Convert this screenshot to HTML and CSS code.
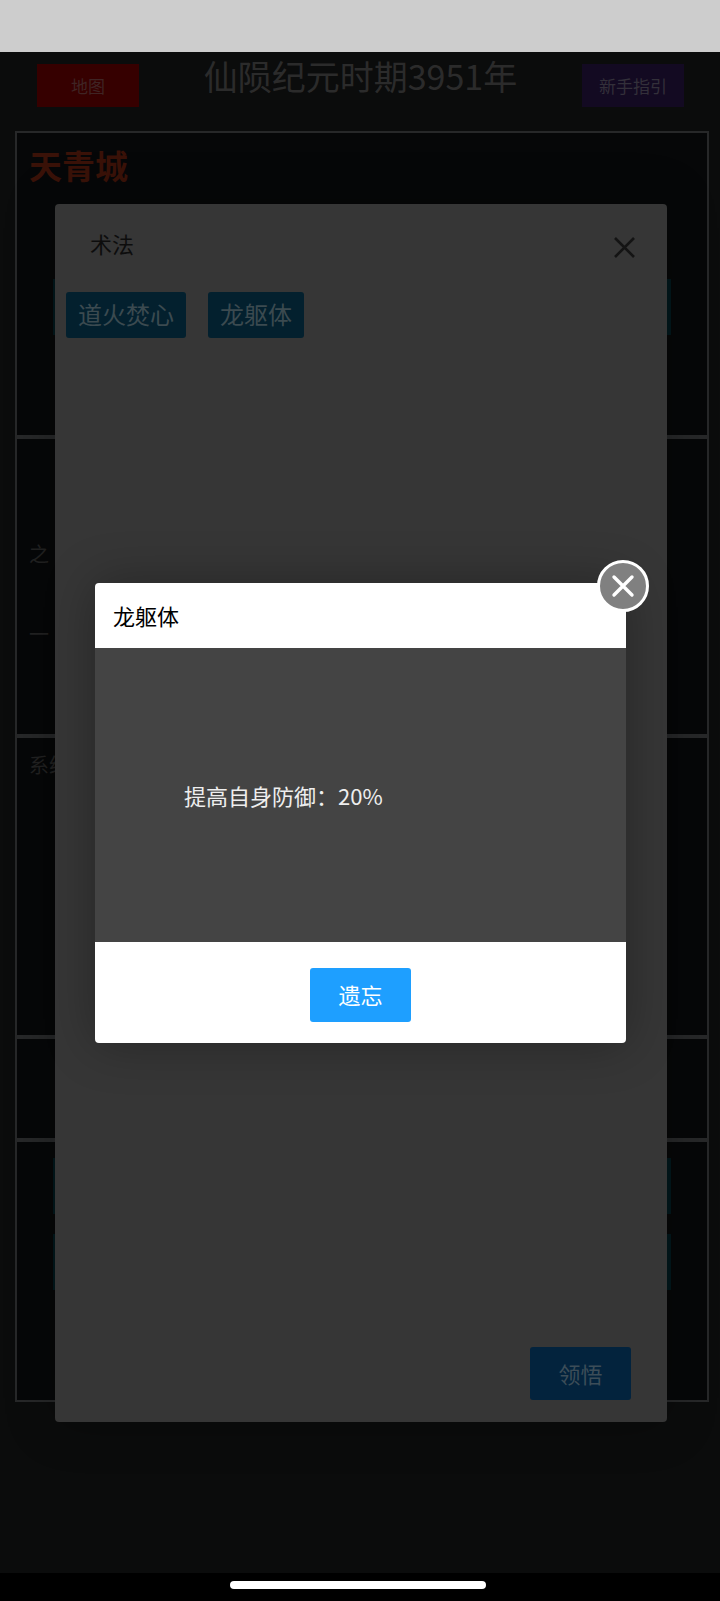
FILE: index.html
```html
<!DOCTYPE html>
<html lang="zh-CN">
<head>
    <meta charset="UTF-8">
    <title>仙陨纪元</title>
    <link rel="stylesheet" href="styles.css">
</head>
<body>
    <div class="status-bar"></div>

    <div class="page">
        <div class="top">
            <a class="top-btn map-btn">地图</a>
            <h1>仙陨纪元时期3951年</h1>
            <a class="top-btn guide-btn">新手指引</a>
        </div>

        <div class="board">
            <section class="cell cell-city">
                <h2>天青城</h2>
                <div class="strip"></div>
            </section>
            <section class="cell cell-info">
                <p class="faint">之</p>
                <p class="faint">一</p>
            </section>
            <section class="cell cell-sys">
                <p class="faint">系统</p>
            </section>
            <section class="cell cell-mid"></section>
            <section class="cell cell-last">
                <div class="strip"></div>
                <div class="strip"></div>
            </section>
        </div>
    </div>

    <div class="skills">
        <div class="skills-head">
            <span>术法</span>
            <svg class="skills-close" viewBox="0 0 21 21">
                <path d="M1 1 L20 20 M20 1 L1 20"/>
            </svg>
        </div>
        <div class="skills-list">
            <a class="chip">道火焚心</a>
            <a class="chip">龙躯体</a>
        </div>
        <a class="learn-btn">领悟</a>
    </div>

    <div class="detail">
        <div class="detail-head">龙躯体</div>
        <div class="detail-body">提高自身防御：20%</div>
        <div class="detail-foot">
            <a class="forget-btn">遗忘</a>
        </div>
        <svg class="detail-close" viewBox="0 0 52 52">
            <circle cx="26" cy="26" r="24.5"/>
            <path d="M17 17 L35 35 M35 17 L17 35"/>
        </svg>
    </div>

    <div class="nav-bar"><span class="nav-pill"></span></div>
</body>
</html>
```

FILE: styles.css
```css
* {
    box-sizing: border-box;
}
html, body {
    margin: 0;
    height: 1601px;
    overflow: hidden;
}
body {
    position: relative;
    display: flex;
    flex-direction: column;
    background: #0b0c0c;
    font-family: "Noto Sans CJK SC", "Noto Sans", sans-serif;
}
h1, h2, p {
    margin: 0;
    font-weight: normal;
}

.status-bar {
    height: 52px;
    background: #cdcdcd;
}
.nav-bar {
    position: absolute;
    left: 0;
    right: 0;
    bottom: 0;
    height: 28px;
    background: #000;
}
.nav-pill {
    position: absolute;
    left: 230px;
    top: 8px;
    width: 256px;
    height: 8px;
    border-radius: 4px;
    background: #fff;
}

.page {
    flex: 1;
    padding: 0 11px 0 15px;
}
.top {
    display: flex;
    justify-content: space-between;
    height: 79px;
    padding: 12px 25px 0 22px;
}
.top h1 {
    margin-top: -13px;
    font-size: 34px;
    line-height: 50px;
    color: #2b2b2b;
}
.top-btn {
    width: 102px;
    height: 43px;
    font-size: 17px;
    line-height: 43px;
    text-align: center;
}
.map-btn {
    background: #360000;
    color: #3f2424;
}
.guide-btn {
    background: #130a22;
    color: #33303a;
}

.board {
    width: 694px;
}
.cell {
    border: 2px solid #272829;
    padding: 0 12px;
    background: #060708;
}
.cell-city {
    height: 306px;
    padding-top: 12px;
}
.cell-info {
    height: 299px;
    padding-top: 100px;
}
.cell-sys {
    height: 301px;
    padding-top: 12px;
}
.cell-mid {
    height: 103px;
}
.cell-last {
    height: 262px;
    padding-top: 16px;
}
.cell-city h2 {
    font-size: 33px;
    font-weight: bold;
    line-height: 40px;
    color: #3a1208;
}
.cell-city .strip {
    margin-top: 94px;
}
.faint {
    font-size: 20px;
    line-height: 30px;
    color: #222;
}
.cell-info .faint + .faint {
    margin-top: 50px;
}
.strip {
    height: 56px;
    margin-bottom: 20px;
    margin-left: 24px;
    margin-right: 24px;
    background: #02181c;
}

.skills {
    position: absolute;
    left: 55px;
    top: 204px;
    width: 612px;
    height: 1218px;
    border-radius: 4px;
    background: #363636;
    box-shadow: 0 0 50px rgba(0, 0, 0, .3);
}
.skills-head {
    display: flex;
    justify-content: space-between;
    align-items: center;
    height: 78px;
    padding: 0 32px 0 35px;
    font-size: 22px;
    color: #0d0d0d;
}
.skills-close {
    width: 21px;
    height: 21px;
    margin-top: 8px;
}
.skills-close path {
    fill: none;
    stroke: #141414;
    stroke-width: 2.6;
}
.skills-list {
    display: flex;
    gap: 22px;
    padding: 10px 0 0 11px;
}
.chip {
    height: 46px;
    padding: 0 12px;
    border-radius: 3px;
    background: #03202e;
    font-size: 24px;
    line-height: 44px;
    color: #3b4a50;
}
.learn-btn {
    position: absolute;
    right: 36px;
    bottom: 22px;
    width: 101px;
    height: 53px;
    border-radius: 3px;
    background: #03233d;
    font-size: 22px;
    line-height: 52px;
    text-align: center;
    color: #3c4d58;
}

.detail {
    position: absolute;
    left: 95px;
    top: 583px;
    width: 531px;
    height: 460px;
    display: flex;
    flex-direction: column;
    border-radius: 4px;
    background: #fff;
    box-shadow: 0 0 50px rgba(0, 0, 0, .3);
}
.detail-head {
    height: 65px;
    padding-left: 18px;
    font-size: 22px;
    line-height: 65px;
    color: #000;
}
.detail-body {
    height: 294px;
    padding: 0 0 0 89px;
    background: #444;
    font-size: 22px;
    line-height: 294px;
    color: #eee;
}
.detail-foot {
    flex: 1;
    display: flex;
    justify-content: center;
    padding-top: 26px;
}
.forget-btn {
    width: 101px;
    height: 54px;
    border-radius: 3px;
    background: #1e9fff;
    font-size: 22px;
    line-height: 53px;
    text-align: center;
    color: #fff;
}
.detail-close {
    position: absolute;
    left: 502px;
    top: -23px;
    width: 52px;
    height: 52px;
}
.detail-close circle {
    fill: #808080;
    stroke: #fff;
    stroke-width: 3;
}
.detail-close path {
    fill: none;
    stroke: #fff;
    stroke-width: 3.4;
    stroke-linecap: round;
}
```
